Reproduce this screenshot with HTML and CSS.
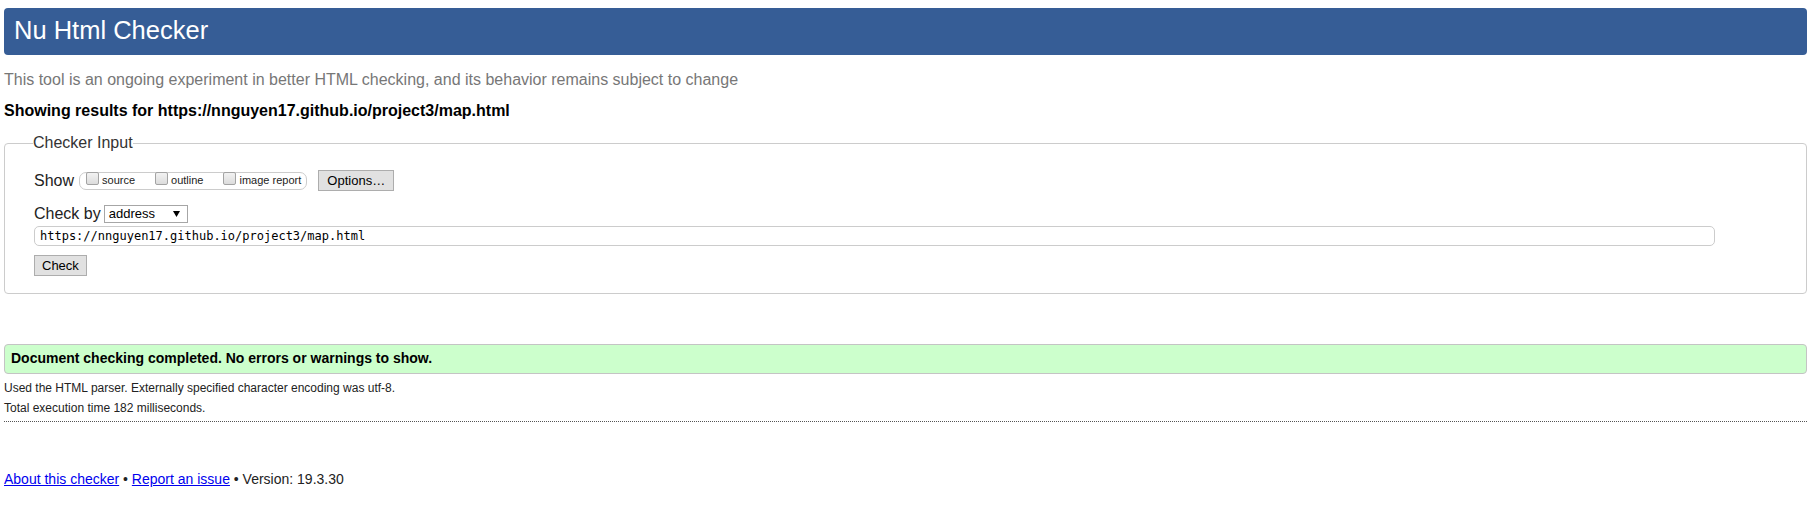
FILE: index.html
```html
<!DOCTYPE html>
<html lang="en">
<head>
<meta charset="utf-8">
<title>Nu Html Checker</title>
<link rel="stylesheet" href="styles.css">
</head>
<body>
<header class="masthead"><h1 class="masthead-title">Nu Html Checker</h1></header>
<p class="intro">This tool is an ongoing experiment in better HTML checking, and its behavior remains subject to change</p>
<p class="showing">Showing results for https://nnguyen17.github.io/project3/map.html</p>
<form class="checker-form">
  <fieldset class="checker-input">
    <legend class="checker-legend">Checker Input</legend>
    <div class="row show-row">
      <span class="row-label">Show</span>
      <span class="opts">
        <label class="opt"><input class="cb" type="checkbox"><span class="opt-text">source</span></label>
        <label class="opt"><input class="cb" type="checkbox"><span class="opt-text">outline</span></label>
        <label class="opt"><input class="cb" type="checkbox"><span class="opt-text">image report</span></label>
      </span>
      <button type="button" class="btn btn-options">Options…</button>
    </div>
    <div class="row checkby-row">
      <span class="row-label">Check by</span>
      <span class="select">
        <span class="select-value">address</span>
        <svg class="select-arrow" width="7" height="6" viewBox="0 0 7 6"><path d="M0 0H7L3.5 6Z" fill="#000"/></svg>
      </span>
    </div>
    <div class="url-row"><input class="url" type="text" value="https://nnguyen17.github.io/project3/map.html"></div>
    <div class="submit-row"><button type="button" class="btn btn-check">Check</button></div>
  </fieldset>
</form>
<div class="success">Document checking completed. No errors or warnings to show.</div>
<p class="details details-first">Used the HTML parser. Externally specified character encoding was utf-8.</p>
<p class="details">Total execution time 182 milliseconds.</p>
<hr class="divider">
<p class="footer"><a href="#" class="footer-link">About this checker</a> • <a href="#" class="footer-link">Report an issue</a> • Version: 19.3.30</p>
</body>
</html>
```
FILE: styles.css
```css
html, body {
  background: #fff;
}
body {
  margin: 0;
  padding: 8px 3px 0 4px;
  font-family: "Liberation Sans", Arial, sans-serif;
  color: #222;
}
.masthead {
  background: #365d96;
  border-radius: 4px;
  height: 47px;
  box-sizing: border-box;
  padding: 0 0 3px 10px;
}
.masthead-title {
  margin: 0;
  font-size: 25.5px;
  font-weight: normal;
  line-height: 44px;
  color: #fff;
}
.intro {
  margin: 16px 0 0;
  font-size: 16px;
  line-height: 18px;
  color: #777;
}
.showing {
  margin: 13px 0 0;
  font-size: 16px;
  line-height: 18px;
  font-weight: bold;
  color: #000;
}
.checker-form {
  margin: 14px 0 0;
}
.checker-input {
  margin: 0;
  border: 1px solid #ccc;
  border-radius: 4px;
  padding: 18px 28px 17px 29px;
  min-width: 0;
}
.checker-legend {
  font-size: 16px;
  line-height: 18px;
  padding: 0;
  margin-left: -1px;
  color: #333;
}
.row {
  display: flex;
  align-items: center;
}
.row-label {
  font-size: 16px;
  line-height: 18px;
  color: #222;
}
.show-row {
  height: 21px;
}
.opts {
  display: flex;
  align-items: center;
  height: 18px;
  box-sizing: border-box;
  border: 1px solid #ccc;
  border-radius: 7px;
  margin-left: 5px;
  padding: 0 5px 0 6px;
  gap: 20px;
}
.opt {
  display: flex;
  align-items: center;
  gap: 3px;
}
.cb {
  appearance: none;
  -webkit-appearance: none;
  margin: 0 0 4px 0;
  width: 13px;
  height: 13px;
  box-sizing: border-box;
  border: 1px solid #a3a3a3;
  border-radius: 2px;
  background: linear-gradient(#f2f2f2, #dcdcdc);
}
.opt-text {
  font-size: 11px;
  line-height: 13px;
  color: #222;
}
.btn {
  font-family: "Liberation Sans", Arial, sans-serif;
  font-size: 13px;
  color: #000;
  background: #e1e1e1;
  border: 1px solid #adadad;
  border-radius: 0;
  box-sizing: border-box;
  margin: 0;
}
.btn-options {
  margin-left: 11px;
  width: 76px;
  height: 21px;
  padding: 0;
}
.checkby-row {
  margin-top: 13.5px;
  height: 18px;
}
.select {
  margin-left: 3px;
  display: flex;
  align-items: center;
  justify-content: space-between;
  width: 84px;
  height: 18px;
  box-sizing: border-box;
  border: 1px solid #a6a6a6;
  padding: 0 7px 0 4px;
  background: #fff;
}
.select-value {
  font-size: 13px;
  line-height: 16px;
  color: #000;
}
.select-arrow {
  display: block;
}
.url-row {
  margin-top: 3px;
}
.url {
  display: block;
  width: 1681px;
  height: 20.5px;
  box-sizing: border-box;
  margin: 0;
  border: 1px solid #ccc;
  border-radius: 5px;
  padding: 0 5px;
  font-family: "DejaVu Sans Mono", "Liberation Mono", monospace;
  font-size: 12px;
  color: #000;
  background: #fff;
}
.submit-row {
  margin-top: 9px;
}
.btn-check {
  display: block;
  height: 20.5px;
  padding: 0 7px;
}
.success {
  margin-top: 50.5px;
  border: 1px solid #c4c4c4;
  border-radius: 4px;
  background: #ccffcc;
  padding: 0 6px;
  font-size: 14px;
  line-height: 27.5px;
  font-weight: bold;
  color: #000;
}
.details {
  margin: 0;
  font-size: 12px;
  line-height: 20px;
  color: #222;
}
.details-first {
  margin-top: 4px;
}
.divider {
  margin: 3px 0 0;
  border: 0;
  border-top: 1px dotted #555;
  height: 0;
}
.footer {
  margin: 48px 0 0;
  font-size: 14px;
  line-height: 18px;
  color: #222;
}
.footer-link {
  color: #0000ee;
}
```
